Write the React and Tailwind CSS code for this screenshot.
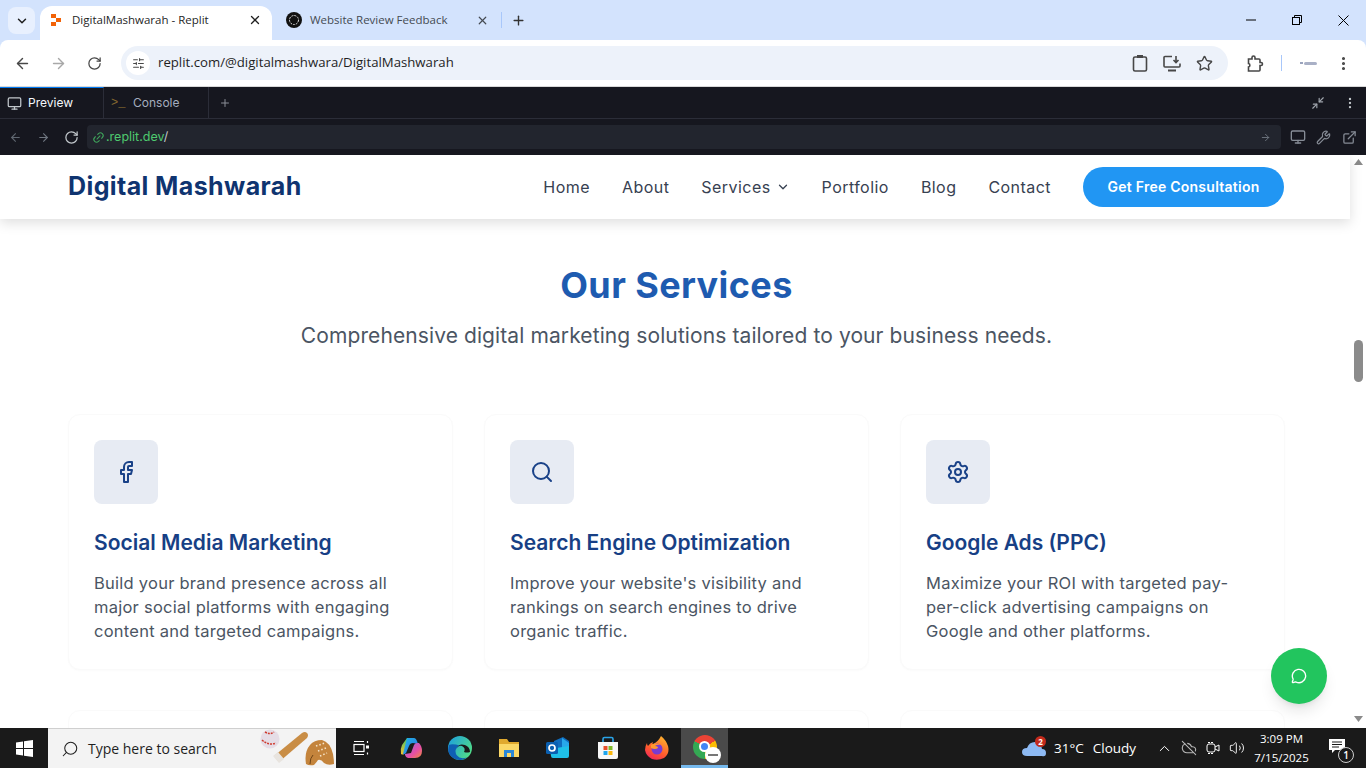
import {
  ArrowLeft, ArrowRight, ChevronDown, ChevronUp, EllipsisVertical, ExternalLink, Facebook, Link2,
  MessageCircle, Minimize2, Monitor, Plus, RotateCw, Search, Settings, SlidersHorizontal,
  Star, Volume2, Wrench, X, CloudOff,
} from "lucide-react";

const services = [
  {
    title: "Social Media Marketing",
    text: ["Build your brand presence across all", "major social platforms with engaging", "content and targeted campaigns."],
    Icon: Facebook,
  },
  {
    title: "Search Engine Optimization",
    text: ["Improve your website's visibility and", "rankings on search engines to drive", "organic traffic."],
    Icon: Search,
  },
  {
    title: "Google Ads (PPC)",
    text: ["Maximize your ROI with targeted pay-", "per-click advertising campaigns on", "Google and other platforms."],
    Icon: Settings,
  },
];

const navLinks = ["Home", "About", "Services", "Portfolio", "Blog", "Contact"];

function TabBar() {
  return (
    <div className="h-10 bg-[#d3e3fd] flex items-end pl-2 font-['Open_Sans',sans-serif] text-[11.5px] shrink-0">
      <div className="w-[27px] h-[27px] mb-[6px] rounded-lg bg-[#e8f0fe] flex items-center justify-center">
        <ChevronDown size={14} strokeWidth={2.5} className="text-[#1f1f1f]" />
      </div>
      <div className="w-[232px] h-[34px] ml-[5px] bg-white rounded-t-xl flex items-center pb-[6px] pl-[10px] pr-[10px] text-[#1f1f1f]">
        <svg width="12" height="12" viewBox="0 0 12 12" className="shrink-0">
          <path d="M1 0h5v4H1zM6 4h5v4H6zM1 8h5v4H1z" fill="#f26207" />
        </svg>
        <span className="ml-[10px] flex-1">DigitalMashwarah - Replit</span>
        <X size={14} strokeWidth={2.2} />
      </div>
      <div className="w-[229px] h-[34px] flex items-center pb-[6px] pl-[14px] pr-[12px] text-[#454b52]">
        <svg width="16" height="16" viewBox="0 0 16 16" className="shrink-0">
          <circle cx="8" cy="8" r="8" fill="#111" />
          <circle cx="8" cy="8" r="4.5" fill="none" stroke="#ddd" strokeWidth="1" strokeDasharray="2 1" />
        </svg>
        <span className="ml-2 flex-1">Website Review Feedback</span>
        <X size={13} strokeWidth={2.2} />
      </div>
      <div className="w-px h-4 bg-[#a8c7fa] mb-[12px]" />
      <Plus size={15} strokeWidth={2.2} className="ml-[9px] mb-[12px] text-[#333]" />
      <div className="flex-1" />
      <div className="h-10 flex items-center text-black">
        <div className="w-[46px] flex justify-center">
          <svg width="10" height="10" viewBox="0 0 10 10"><path d="M0 5h10" stroke="currentColor" /></svg>
        </div>
        <div className="w-[46px] flex justify-center">
          <svg width="10" height="10" viewBox="0 0 10 10" fill="none" stroke="currentColor">
            <rect x="0.5" y="2.5" width="7" height="7" />
            <path d="M2.5 2.5v-2h7v7h-2" />
          </svg>
        </div>
        <div className="w-[46px] flex justify-center">
          <svg width="11" height="11" viewBox="0 0 11 11"><path d="M0.5 0.5l10 10M10.5 0.5l-10 10" stroke="currentColor" /></svg>
        </div>
      </div>
    </div>
  );
}

function Toolbar() {
  return (
    <div className="h-[47px] bg-white flex items-center text-[#474747] shrink-0 rounded-t-lg border-b border-[#d8d8d8]">
      <ArrowLeft size={17} strokeWidth={2} className="ml-[14px]" />
      <ArrowRight size={17} strokeWidth={2} className="ml-[19px] text-[#a8a8a8]" />
      <RotateCw size={15} strokeWidth={2} className="ml-[20px]" />
      <div className="ml-[19px] w-[1107px] h-[34px] rounded-full bg-[#edf2fa] flex items-center pl-[5px] pr-[15px]">
        <div className="w-6 h-6 rounded-full bg-white flex items-center justify-center">
          <SlidersHorizontal size={13} strokeWidth={2} />
        </div>
        <span className="ml-2 flex-1 text-[13.2px] text-[#1f1f1f] font-['Open_Sans',sans-serif]">
          replit.com/@digitalmashwara/DigitalMashwarah
        </span>
        <svg width="16" height="18" viewBox="0 0 16 18" fill="none" stroke="currentColor" strokeWidth="1.6">
          <rect x="1.5" y="3" width="13" height="14" rx="1.5" />
          <rect x="5" y="1" width="6" height="3" fill="currentColor" stroke="none" />
        </svg>
        <svg width="18" height="17" viewBox="0 0 18 17" fill="none" stroke="currentColor" strokeWidth="1.6" className="ml-[15px]">
          <path d="M9 1.5H2a1 1 0 0 0-1 1V11a1 1 0 0 0 1 1h14a1 1 0 0 0 1-1V8.5" />
          <path d="M13 1v6M10.5 5l2.5 2.5L15.500 5" />
          <path d="M5 15.500h8" strokeWidth="2" />
        </svg>
        <Star size={17} strokeWidth={2} className="ml-[15px]" />
      </div>
      <svg width="17" height="17" viewBox="0 0 17 17" fill="none" stroke="currentColor" strokeWidth="1.6" className="ml-[19px]">
        <path d="M1.500 4h3.500V2.500a1.500 1.500 0 0 1 3 0V4h4a1 1 0 0 1 1 1v2.500h1a1.500 1.500 0 0 1 0 3h-1V15a1 1 0 0 1-1 1H1.500v-4a1.800 1.800 0 0 0 0-3.500z" />
      </svg>
      <div className="w-px h-4 bg-[#a8c7fa] ml-[17px]" />
      <div className="ml-[18px] w-[17px] flex items-center gap-px">
        <div className="w-[3px] h-[2px] bg-[#9aa3bd]" />
        <div className="flex-1 h-[3px] rounded-full bg-[#a9b0c6]" />
      </div>
      <EllipsisVertical size={17} strokeWidth={2.4} className="ml-[18px]" />
    </div>
  );
}

function ReplitBar() {
  return (
    <div className="bg-[#16171f] shrink-0 font-['Inter',sans-serif] text-xs">
      <div className="h-8 flex items-stretch border-b border-[#2b2d38]">
        <div className="w-[104px] flex items-center gap-[6px] pl-[7px] text-[#f5f9fc] border-r border-[#2b2d38] border-t border-t-[#0079f2]">
          <Monitor size={15} className="text-[#c2c8cc]" />
          Preview
        </div>
        <div className="w-[105px] flex items-center pl-[7px] text-[#a4adbd] border-r border-[#2b2d38]">
          <span className="w-[22px] text-[#85692f] font-['Liberation_Mono',monospace] text-[12px]">&gt;_</span>
          <span>Console</span>
        </div>
        <div className="w-8 flex items-center justify-center text-[#8a8f98]"><Plus size={12} /></div>
        <div className="flex-1" />
        <div className="flex items-center text-[#a0a5ad]">
          <Minimize2 size={14} className="mr-[18px]" />
          <EllipsisVertical size={14} className="mr-[9px] text-[#c2c8cc]" />
        </div>
      </div>
      <div className="h-9 flex items-center">
        <ArrowLeft size={13} className="ml-[9px] text-[#5f6670]" />
        <ArrowRight size={13} className="ml-[15px] text-[#6f7680]" />
        <RotateCw size={15} className="ml-[14px] text-[#c2c8cc]" />
        <div className="ml-2 w-[1194px] h-6 bg-[#22252e] rounded flex items-center pl-[5px] pr-[10px]">
          <Link2 size={13} className="text-[#3fa45b] -rotate-45" />
          <span className="ml-px flex-1 text-[#4ec96f] text-[12.5px]">.replit.dev<span className="text-[#c2c8cc]">/</span></span>
          <ArrowRight size={11} className="text-[#6f7680]" />
        </div>
        <Monitor size={16} className="ml-[9px] text-[#868c96]" />
        <Wrench size={15} className="ml-[10px] text-[#868c96]" />
        <ExternalLink size={15} className="ml-[11px] text-[#868c96]" />
      </div>
    </div>
  );
}

function SiteNav() {
  return (
    <header className="relative z-10 h-16 bg-white shadow-[0_4px_12px_rgba(0,0,0,0.13)] flex items-center pl-[68px] pr-[66px] shrink-0">
      <span className="text-[25px] font-bold text-[#0f3470] tracking-[0.4px] flex-1">Digital Mashwarah</span>
      <nav className="flex items-center gap-8 text-[#374151] text-[16px] tracking-[0.45px]">
        {navLinks.map((l) => (
          <span key={l} className="flex items-center gap-[5px]">
            {l}
            {l === "Services" && <ChevronDown size={14} strokeWidth={2.2} />}
          </span>
        ))}
      </nav>
      <button className="ml-8 w-[201px] h-10 rounded-full bg-[#2196f3] text-white text-sm font-semibold tracking-[0.25px]">
        Get Free Consultation
      </button>
    </header>
  );
}

function ServiceCard({ title, text, Icon }) {
  return (
    <div className="h-[256px] rounded-xl bg-white border border-[#fafafa] shadow-[0_1px_2px_rgba(0,0,0,0.02)] p-[25px]">
      <div className="w-16 h-16 rounded-lg bg-[#e7ebf3] flex items-center justify-center">
        <Icon size={24} strokeWidth={2} className="text-[#1a4288]" />
      </div>
      <h3 className="mt-[25px] text-[21px] leading-7 font-semibold text-[#173f85]">{title}</h3>
      <p className="mt-[14px] text-[16.5px] leading-6 tracking-[0.25px] text-[#4b5563]">
        {text.map((t) => (
          <span key={t} className="block whitespace-nowrap">{t}</span>
        ))}
      </p>
    </div>
  );
}

function Page() {
  return (
    <div className="relative flex-1 min-h-0 flex bg-white font-['Inter',sans-serif] overflow-hidden">
      <div className="flex-1 min-w-0 flex flex-col">
        <SiteNav />
        <main className="flex-1 min-h-0 overflow-hidden bg-white pl-[68px] pr-[65px]">
          <h2 className="mt-[43px] text-center text-[36px] leading-[46px] font-bold tracking-[0.4px] text-[#1e5bb0]">Our Services</h2>
          <p className="mt-[14px] text-center text-[21px] leading-7 tracking-[0.1px] text-[#4b5563]">
            Comprehensive digital marketing solutions tailored to your business needs.
          </p>
          <div className="mt-[64px] grid grid-cols-3 gap-x-[31px] gap-y-[40px]">
            {services.map((s) => (
              <ServiceCard key={s.title} {...s} />
            ))}
            <div className="h-24 rounded-xl border border-[#fafafa]" />
            <div className="h-24 rounded-xl border border-[#fafafa]" />
            <div className="h-24 rounded-xl border border-[#fafafa]" />
          </div>
        </main>
      </div>
      <div className="w-4 bg-white flex flex-col items-center justify-between pt-[4px] pb-[6px] text-[#8a8a8a]">
        <svg width="9" height="6" viewBox="0 0 9 6"><path d="M4.5 0L9 6H0z" fill="currentColor" /></svg>
        <svg width="9" height="6" viewBox="0 0 9 6"><path d="M0 0h9L4.5 6z" fill="currentColor" /></svg>
      </div>
      <div className="absolute right-[3px] top-[185px] w-[9px] h-[42px] rounded-full bg-[#8b8b8b]" />
      <button className="absolute left-[1271px] top-[493px] w-14 h-14 rounded-full bg-[#22c55e] shadow-lg flex items-center justify-center">
        <MessageCircle size={16} strokeWidth={2} className="text-white" />
      </button>
    </div>
  );
}

function Taskbar() {
  return (
    <div className="h-10 bg-[#1a1a1a] flex items-stretch text-white shrink-0 font-['Open_Sans',sans-serif]">
      <div className="w-12 flex items-center justify-center">
        <svg width="17" height="17" viewBox="0 0 17 17">
          <path d="M0 2.4 7 1.4v6.6H0zM8 1.3 17 0v8H8zM0 9h7v6.6l-7-1zM8 9h9v8l-9-1.3z" fill="#fff" />
        </svg>
      </div>
      <div className="w-[288px] bg-[#f3f3f3] flex items-center pl-[13px] text-[#1f1f1f] text-sm border-t border-[#cfcfcf]">
        <Search size={18} strokeWidth={1.4} className="-scale-x-100" />
        <span className="ml-[9px] flex-1">Type here to search</span>
        <svg width="76" height="40" viewBox="0 0 76 40" className="shrink-0">
          <circle cx="10" cy="10" r="9.500" fill="#e5dde6" />
          <path d="M5 3q5 3 9 0M2 11q7 6 14 3" stroke="#cf3a2c" strokeWidth="1.500" strokeDasharray="2 1" fill="none" />
          <path d="M19 33 14 27 42 4q3-2 5 0t0 5z" fill="#c98d45" />
          <path d="M13 27l6 7 5-4-6-7z" fill="#e8e4df" />
          <path d="M46 35q-2-12 4-19 4-5 12-5 8 2 11 14 1 6 1 10-6 2-10-1-3-4-6-3-2 3-4 5-5 1-8-1" fill="#c4843c" />
          <path d="M56 17l9-3M58 22l8-3M60 27l7-3" stroke="#f6e4c8" strokeWidth="1.600" strokeDasharray="1.500 2" />
          <path d="M50 35q0-6 3-9" stroke="#6f4517" strokeWidth="1" fill="none" />
        </svg>
      </div>
      <div className="w-[50px] flex items-center justify-center">
        <svg width="16" height="16" viewBox="0 0 16 16" fill="none" stroke="#fff" strokeWidth="1.2">
          <rect x="1" y="4.5" width="10" height="7" />
          <path d="M1 1.500h10M1 14.500h10M14.500 1v2M14.500 12.500v2" />
          <rect x="13" y="5.500" width="3" height="3" fill="#fff" stroke="none" />
        </svg>
      </div>
      <div className="w-[49px] flex items-center justify-center">
        <svg width="24" height="24" viewBox="0 0 24 24">
          <defs>
            <linearGradient id="cpA" x1="0" y1="0" x2="1" y2="1">
              <stop offset="0" stopColor="#1fb6e8" />
              <stop offset="1" stopColor="#2f6fe0" />
            </linearGradient>
            <linearGradient id="cpB" x1="0" y1="0" x2="1" y2="1">
              <stop offset="0" stopColor="#8f6ae8" />
              <stop offset="0.6" stopColor="#e64fa5" />
              <stop offset="1" stopColor="#f28a3c" />
            </linearGradient>
            <linearGradient id="cpC" x1="0" y1="0" x2="0" y2="1">
              <stop offset="0" stopColor="#43c46c" />
              <stop offset="1" stopColor="#f6c22e" />
            </linearGradient>
          </defs>
          <path d="M8 2h6q2 0 2 2l-4 1q-3 1-4 5l-3 8q-1 1-3 0-1-5 1-9z" fill="url(#cpC)" />
          <path d="M8 2h7q2 0 3 3l1 3-5-1q-3 0-4 3l-3 7q-2 2-3 1z" fill="url(#cpA)" />
          <path d="M16 22H9q-2 0-3-3l-0-1 6-1 3-8q1-2 3-2h2q3 3 3 8 0 7-7 7z" fill="url(#cpB)" />
        </svg>
      </div>
      <div className="w-[49px] flex items-center justify-center">
        <svg width="24" height="24" viewBox="0 0 24 24">
          <defs>
            <linearGradient id="edA" x1="0" y1="0" x2="1" y2="0.6">
              <stop offset="0" stopColor="#1b9de2" />
              <stop offset="1" stopColor="#4fdb8a" />
            </linearGradient>
          </defs>
          <circle cx="12" cy="12" r="12" fill="url(#edA)" />
          <path d="M1 9q-3 9 5 13.500 7 3.500 13-1-7 2-10-2-3-4 0-8 1-2 3-2-8-2-11-.5" fill="#0f5fb3" />
          <path d="M9 12q2-5 8-3 5 2 5 7-3 1-6 0 2-4-2-6-3-1-5 2" fill="#1a1a1a" />
        </svg>
      </div>
      <div className="w-[49px] flex items-center justify-center">
        <svg width="22" height="20" viewBox="0 0 22 20">
          <path d="M1 1h8l2 3h10v15H1z" fill="#e0a92e" />
          <path d="M1 6h20v13H1z" fill="#fbd867" />
          <path d="M6 19v-7h10v7h-3v-4H9v4z" fill="#2a87d8" />
        </svg>
      </div>
      <div className="w-[50px] flex items-center justify-center">
        <svg width="24" height="24" viewBox="0 0 24 24">
          <path d="M8 5l9-4 6 4v12H8z" fill="#0f6cbd" />
          <path d="M16 2l7 5v5h-7z" fill="#28a8ea" />
          <path d="M4 13l19-3v10q0 2-2 2H7q-2 0-2-2z" fill="#1fc0e8" />
          <rect x="0" y="6" width="12" height="12" rx="1.500" fill="#0a5fb0" />
          <circle cx="6" cy="12" r="3" fill="none" stroke="#fff" strokeWidth="1.700" />
        </svg>
      </div>
      <div className="w-[49px] flex items-center justify-center">
        <svg width="24" height="24" viewBox="0 0 24 24">
          <path d="M7 7V3q0-1.500 1.500-1.500h7Q17 1.500 17 3v4" fill="none" stroke="#2aa4e8" strokeWidth="1.600" />
          <path d="M2 6h20l0 15q0 2-2 2H4q-2 0-2-2z" fill="#f7f7f7" />
          <path d="M7.500 10h4v4h-4z" fill="#e8502a" />
          <path d="M12.500 10h4v4h-4z" fill="#7fba2a" />
          <path d="M7.500 15h4v4h-4z" fill="#1ea5ee" />
          <path d="M12.500 15h4v4h-4z" fill="#fcb80d" />
        </svg>
      </div>
      <div className="w-[49px] flex items-center justify-center">
        <svg width="24" height="24" viewBox="0 0 24 24">
          <defs>
            <linearGradient id="ffA" x1="0.7" y1="0" x2="0.2" y2="1">
              <stop offset="0" stopColor="#ffb02e" />
              <stop offset="0.6" stopColor="#ff5a2e" />
              <stop offset="1" stopColor="#f0225e" />
            </linearGradient>
          </defs>
          <path d="M16 0q5 4 7 10 2 8-4 12-6 3-12 1-6-3-7-9 0-4 2-7 0 2 1 3 2-3 5-4-1 2 0 2 5-2 8-8z" fill="url(#ffA)" />
          <circle cx="12" cy="13" r="5.500" fill="#7a3bd1" />
          <path d="M6 9q5-3 10 0-4-1-6 1 3 0 3 2-3 2-7 0z" fill="#ff9a2e" />
        </svg>
      </div>
      <div className="w-[47px] bg-[#4a4a4a] border-b-[3px] border-[#76b9ed] flex items-center justify-center">
        <div className="relative w-6 h-6 rounded-full bg-[conic-gradient(from_-60deg,#ea4335_0_33%,#fbbc04_33%_66%,#34a853_66%_100%)] flex items-center justify-center">
          <div className="w-[11px] h-[11px] rounded-full bg-[#4285f4] border-2 border-white" />
          <div className="absolute -right-[4px] -bottom-[4px] w-[16px] h-[16px] rounded-full bg-white flex items-center justify-center">
            <div className="w-[10px] h-[2px] bg-[#777]" />
          </div>
        </div>
      </div>
      <div className="flex-1" />
      <div className="w-[125px] flex items-center text-[13.5px]">
        <div className="relative w-6 h-5">
          <svg width="24" height="20" viewBox="0 0 24 20">
            <path d="M5 18q-5 0-5-4t5-4q2-6 8-6t7 7q4 0 4 4t-4 3z" fill="#8db9f2" />
          </svg>
          <div className="absolute left-[13px] -top-[2px] w-[11px] h-[11px] rounded-full bg-[#c42b1c] text-[8px] leading-[11px] text-center font-bold">2</div>
        </div>
        <span className="ml-2">31°C</span>
        <span className="ml-[9px]">Cloudy</span>
      </div>
      <div className="w-[30px] flex items-center justify-center"><ChevronUp size={17} strokeWidth={1.4} className="ml-1" /></div>
      <div className="w-6 flex items-center justify-center"><CloudOff size={16} strokeWidth={1.6} className="text-[#b8b8b8]" /></div>
      <div className="w-6 flex items-center justify-center">
        <svg width="14" height="16" viewBox="0 0 14 16" fill="none" stroke="#fff" strokeWidth="1">
          <path d="M2 2.500h6M2 13.500h6" strokeDasharray="2 1" />
          <rect x="1" y="4" width="8" height="8" rx="2" />
          <path d="M9 7l4-2v6l-4-2" />
        </svg>
      </div>
      <div className="w-6 flex items-center justify-center"><Volume2 size={16} strokeWidth={1.4} /></div>
      <div className="w-[65px] flex flex-col items-center justify-center text-[11.5px] leading-[19px]">
        <span>3:09 PM</span>
        <span>7/15/2025</span>
      </div>
      <div className="relative w-[52px] flex items-center pl-[15px]">
        <svg width="16" height="14" viewBox="0 0 16 14" className="-mt-[5px]">
          <path d="M0 0h16v11H6l-3 3v-3H0z" fill="#fff" />
          <path d="M3 3h10M3 5.500h10M3 8h7" stroke="#1a1a1a" />
        </svg>
        <div className="absolute left-[24px] top-[19px] w-[16px] h-[16px] rounded-full bg-[#1a1a1a] border border-[#cfcfcf] text-[10px] leading-[14px] text-center font-semibold">1</div>
      </div>
    </div>
  );
}

export default function App() {
  return (
    <div className="h-screen w-screen overflow-hidden flex flex-col bg-[#d3e3fd]">
      <TabBar />
      <Toolbar />
      <ReplitBar />
      <Page />
      <Taskbar />
    </div>
  );
}
